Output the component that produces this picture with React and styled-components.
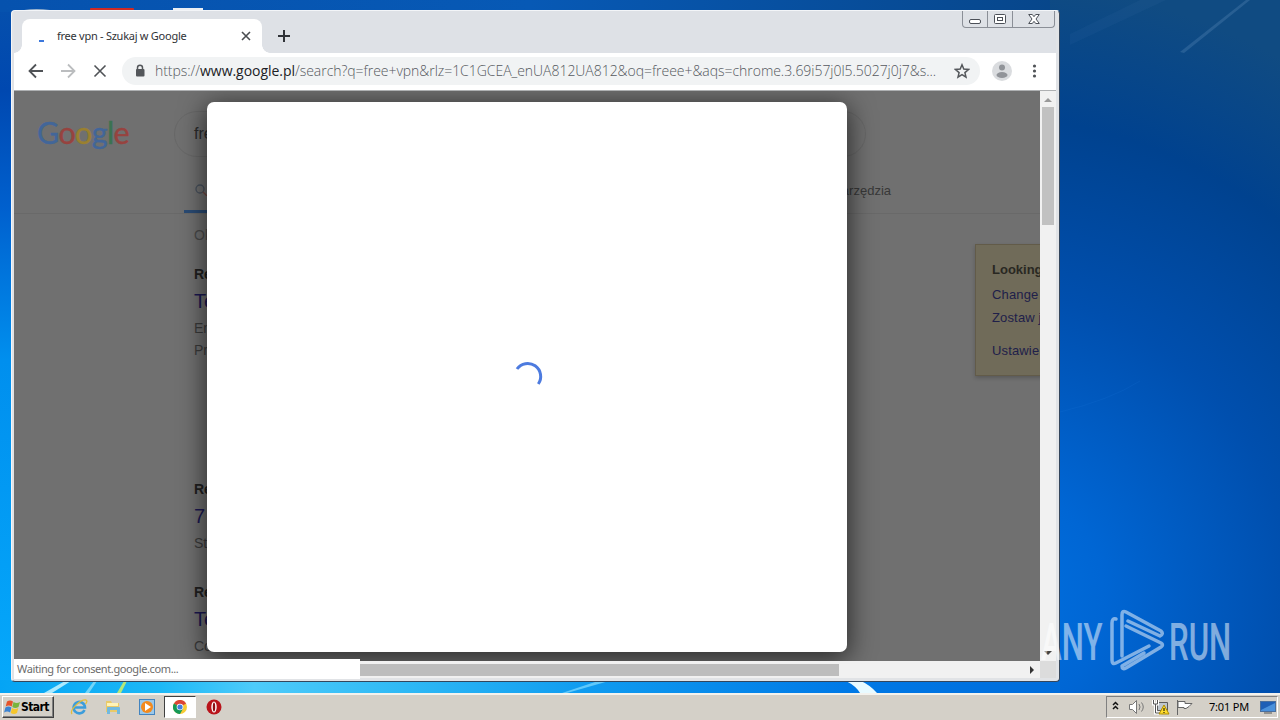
import React from 'react';
import styled, { createGlobalStyle, css } from 'styled-components';

const GlobalStyle = createGlobalStyle`
  * { box-sizing: border-box; }
  body { margin: 0; overflow: hidden; }
  svg { display: block; flex: none; }
`;

const Screen = styled.div`
  position: relative;
  width: 1280px;
  height: 720px;
  display: flex;
  flex-direction: column;
  overflow: hidden;
  font-family: "Noto Sans", "DejaVu Sans", sans-serif;
`;

const Desktop = styled.main`
  position: relative;
  flex: 1;
  overflow: hidden;
`;

const Wallpaper = styled.svg`
  position: absolute;
  inset: 0;
`;

const Window = styled.section`
  position: absolute;
  left: 11px;
  top: 10px;
  width: 1049px;
  height: 672px;
  display: flex;
  flex-direction: column;
  padding: 0 3px 3px 2px;
  background: #e1e3e6;
  border: 1px solid #34465c;
  border-top-color: #f3f5f8;
  border-left-color: #f3f5f8;
  border-radius: 4px;
  overflow: hidden;
`;

const TitleBar = styled.header`
  display: flex;
  align-items: flex-end;
  height: 42px;
  flex: none;
  background: #dee1e6;
`;

const Tab = styled.div`
  position: relative;
  display: flex;
  align-items: center;
  width: 240px;
  height: 34px;
  margin-left: 8px;
  padding: 0 10px 0 16px;
  background: #fff;
  border-radius: 8px 8px 0 0;
  &::before, &::after {
    content: "";
    position: absolute;
    bottom: 0;
    width: 8px;
    height: 8px;
  }
  &::before {
    left: -8px;
    background: radial-gradient(circle at 0 0, transparent 7.5px, #fff 8px);
  }
  &::after {
    right: -8px;
    background: radial-gradient(circle at 100% 0, transparent 7.5px, #fff 8px);
  }
`;

const TabTitle = styled.span`
  flex: 1;
  margin-left: 12px;
  font-size: 11px;
  line-height: 16px;
  letter-spacing: -0.26px;
  color: #303236;
  white-space: nowrap;
`;

const NewTab = styled.div`
  align-self: flex-end;
  margin: 0 0 10px 16px;
`;

const WindowButtons = styled.div`
  display: flex;
  align-self: flex-start;
  height: 17px;
  margin: 0 1px 0 auto;
  border: 1px solid #8b8f97;
  border-top: 0;
  border-radius: 0 0 4px 4px;
`;

const WindowButton = styled.div`
  width: ${p => p.$width}px;
  display: flex;
  align-items: center;
  justify-content: center;
  & + & { border-left: 1px solid #8b8f97; }
`;

const Toolbar = styled.div`
  display: flex;
  align-items: center;
  flex: none;
  height: 38px;
  padding: 0 11px 1px 12px;
  background: #fff;
  border-bottom: 1px solid #aeb0b2;
`;

const ToolIcon = styled.svg`
  margin-right: ${p => p.$gap || 0}px;
`;

const AddressBar = styled.div`
  display: flex;
  align-items: center;
  flex: none;
  width: 858px;
  height: 28px;
  padding: 0 10px 0 12px;
  background: #f1f3f4;
  border-radius: 14px;
`;

const Url = styled.span`
  flex: 1;
  margin-left: 9px;
  font-family: "Open Sans", sans-serif;
  font-weight: 300;
  font-size: 14px;
  line-height: 20px;
  letter-spacing: -0.04px;
  color: #55595e;
  white-space: nowrap;
  b { font-weight: 400; color: #202124; }
`;

const Content = styled.div`
  display: grid;
  grid-template-columns: 1026px 16px;
  grid-template-rows: 570px 17px;
  height: 587px;
  margin-right: auto;
  background: #f1f1f1;
`;

const Page = styled.div`
  position: relative;
  overflow: hidden;
  background: #707070;
  color: #2b2b2b;
  font-family: "Liberation Sans", Arial, sans-serif;
`;

const SearchRow = styled.div`
  display: flex;
  align-items: center;
  height: 86px;
  padding-left: 23px;
`;

const Logo = styled.div`
  width: 137px;
  margin-top: -4px;
  font-family: Lato, sans-serif;
  font-size: 30.5px;
  line-height: 40px;
  letter-spacing: -0.65px;
  span { -webkit-text-stroke: 0.4px currentColor; }
`;

const LogoLetter = styled.span`
  color: ${p => p.$color};
`;

const SearchBox = styled.div`
  width: 692px;
  height: 46px;
  padding: 0 19px;
  border: 1px solid #686868;
  border-radius: 23px;
  font-size: 16px;
  line-height: 44px;
`;

const TabRow = styled.div`
  display: flex;
  justify-content: space-between;
  height: 37px;
  padding: 0 149px 0 170px;
  border-bottom: 1px solid #696969;
  font-size: 13px;
  line-height: 27px;
  color: #383838;
`;

const ActiveTab = styled.div`
  width: 70px;
  height: 36px;
  padding: 6px 10px;
  border-bottom: 3px solid #2a4b74;
`;

const Results = styled.div`
  padding: 12px 0 0 180px;
  font-size: 14px;
  line-height: 22px;
  color: #3b3b3b;
`;

const Stats = styled.div`
  line-height: 18px;
  color: #4a4a4a;
`;

const Result = styled.article`
  margin-top: ${p => p.$top}px;
  strong { display: block; line-height: 20px; color: #202020; }
  h3 {
    margin: 0 0 -1px;
    font-size: 20px;
    font-weight: 400;
    line-height: 34px;
    color: #1b1852;
  }
  p { margin: 0; line-height: 22px; }
`;

const Notice = styled.aside`
  position: absolute;
  left: 961px;
  top: 153px;
  width: 120px;
  height: 132px;
  padding: 13px 16px;
  overflow: hidden;
  background: #706b59;
  border: 1px solid #625b49;
  box-shadow: 0 2px 4px rgba(0, 0, 0, .2);
  font-size: 13px;
  letter-spacing: .15px;
  line-height: 23px;
  color: #20204a;
  white-space: nowrap;
  strong { display: block; margin-bottom: 1px; color: #292822; line-height: 24px; font-size: 13px; letter-spacing: 0; }
`;

const NoticeLink = styled.div`
  margin-top: ${p => p.$top || 0}px;
`;

const Dialog = styled.div`
  position: absolute;
  left: 193px;
  top: 11px;
  width: 640px;
  height: 550px;
  display: flex;
  align-items: center;
  justify-content: center;
  background: #fff;
  border-radius: 7px;
  box-shadow: 0 5px 26px 2px rgba(0, 0, 0, .62);
`;

const track = css`
  display: flex;
  align-items: center;
  background: #f1f1f1;
`;

const VScroll = styled.div`
  ${track}
  flex-direction: column;
  justify-content: space-between;
  padding: 6px 0 5px;
`;

const VThumb = styled.div`
  width: 12px;
  height: 118px;
  margin: 5px 0 auto;
  background: #c1c1c1;
`;

const HScroll = styled.div`
  ${track}
  padding: 1px 5px 0 0;
`;

const HThumb = styled.div`
  width: 479px;
  height: 12px;
  margin-right: auto;
  background: #bdbdbd;
`;

const Status = styled.div`
  position: relative;
  width: 346px;
  height: 20px;
  align-self: flex-end;
  padding-left: 3px;
  margin-bottom: -1px;
  background: #fff;
  font-size: 11px;
  line-height: 19px;
  letter-spacing: -0.38px;
  color: #6b6b6b;
`;

const Corner = styled.div`
  background: #dcdcdc;
`;

const Watermark = styled.svg`
  position: absolute;
  left: 1036px;
  top: 604px;
  opacity: .5;
`;

const Taskbar = styled.footer`
  position: relative;
  display: flex;
  align-items: center;
  height: 27px;
  padding: 1px 2px 2px 2px;
  background: #d4d0c8;
  border-top: 2px solid #f4f2ed;
`;

const StartButton = styled.div`
  display: flex;
  align-items: center;
  width: 52px;
  height: 22px;
  margin-right: 8px;
  padding-left: 1px;
  border: 1px solid;
  border-color: #fff #404040 #404040 #fff;
  box-shadow: inset -1px -1px #808080;
  font-family: "DejaVu Sans Condensed", "DejaVu Sans", sans-serif;
  font-size: 12px;
  font-weight: 700;
  letter-spacing: -0.55px;
  color: #000;
`;

const QuickIcon = styled.div`
  display: flex;
  align-items: center;
  justify-content: center;
  width: ${p => p.$width || 34}px;
  height: 22px;
  ${p => p.$active && css`
    background: #fff;
    border: 1px solid;
    border-color: #404040 #fff #fff #404040;
  `}
`;

const Tray = styled.div`
  display: flex;
  align-items: center;
  width: 172px;
  height: 22px;
  margin-left: auto;
  padding-left: 4px;
  border: 1px solid;
  border-color: #808080 #fff #fff #808080;
`;

const Clock = styled.span`
  width: 51px;
  margin-left: 16px;
  font-size: 11px;
  letter-spacing: -0.2px;
  line-height: 18px;
  color: #000;
  white-space: nowrap;
`;

const LOGO = [
  ['G', '#426699'],
  ['o', '#97433f'],
  ['o', '#9a802f'],
  ['g', '#426699'],
  ['l', '#3b7350'],
  ['e', '#97433f'],
];

function DesktopArt() {
  return (
    <Wallpaper width="1280" height="693" viewBox="0 0 1280 693">
      <defs>
        <linearGradient id="left" x1="0" y1="0" x2="0" y2="1">
          <stop offset="0" stopColor="#0650ac" />
          <stop offset=".13" stopColor="#0048b0" />
          <stop offset=".3" stopColor="#0060ce" />
          <stop offset=".52" stopColor="#008fee" />
          <stop offset="1" stopColor="#05a9fb" />
        </linearGradient>
        <linearGradient id="top" x1="0" y1="0" x2="1" y2="0">
          <stop offset="0" stopColor="#0652ae" />
          <stop offset=".5" stopColor="#0759b5" />
          <stop offset="1" stopColor="#07468a" />
        </linearGradient>
        <radialGradient id="right" gradientUnits="userSpaceOnUse" cx="980" cy="600" r="620">
          <stop offset="0" stopColor="#0072e2" />
          <stop offset=".2" stopColor="#0066d4" />
          <stop offset=".5" stopColor="#004fae" />
          <stop offset=".78" stopColor="#00428f" />
          <stop offset="1" stopColor="#104b82" />
        </radialGradient>
        <linearGradient id="foot" x1="0" y1="0" x2="1" y2="0">
          <stop offset="0" stopColor="#05a4f4" />
          <stop offset=".15" stopColor="#1cb8f6" />
          <stop offset=".24" stopColor="#4ecbfa" />
          <stop offset=".38" stopColor="#2fb9f5" />
          <stop offset=".55" stopColor="#109cf0" />
          <stop offset=".8" stopColor="#0079e6" />
          <stop offset="1" stopColor="#006cdb" />
        </linearGradient>
      </defs>
      <rect width="1280" height="693" fill="url(#left)" />
      <rect width="1060" height="12" fill="url(#top)" />
      <rect x="1050" width="230" height="693" fill="url(#right)" />
      <rect y="680" width="1060" height="13" fill="url(#foot)" />
      <path d="M1180 52 1246 0h4l-66 53z" fill="#7fa8d0" opacity=".22" />
      <path d="M1070 34 1140 0h26l-96 45z" fill="#6a9bd0" opacity=".06" />
      <path d="M1060 412Q1110 400 1140 381" fill="none" stroke="#2a86ea" opacity=".12" />
      <path d="M44 693 65 681h6L52 693z" fill="#c8f4ff" opacity=".85" />
      <path d="M85 693 94 681h3l-8 12z" fill="#9ee5f8" opacity=".7" />
      <path d="M117 693 124 681h3l-6 12z" fill="#b4e77a" />
      <path d="M562 693 598 681h11l-42 12z" fill="#83dcff" opacity=".7" />
      <path d="M846 681q10 5 14 12h17q-7-8-16-12z" fill="#e8faff" />
      <path d="M24 10q12-2 26 0z" fill="#9db5ce" />
      <rect x="90" y="8" width="44" height="4" rx="1" fill="#d02a24" />
      <rect x="173" y="8" width="30" height="4" fill="#e9eef3" />
    </Wallpaper>
  );
}

function BrowserBar() {
  return (
    <>
      <TitleBar>
        <Tab>
          <svg width="7" height="16"><rect x="1" y="12" width="5" height="2" fill="#3c78dc" /></svg>
          <TabTitle>free vpn - Szukaj w Google</TabTitle>
          <svg width="12" height="12" stroke="#4a4d51" strokeWidth="1.6"><path d="m2 2 8 8m0-8-8 8" /></svg>
        </Tab>
        <NewTab>
          <svg width="12" height="14" stroke="#303338" strokeWidth="2"><path d="M0 7h12M6 1v12" /></svg>
        </NewTab>
        <WindowButtons>
          <WindowButton $width={24}>
            <svg width="12" height="17" fill="#fff" stroke="#4c5058"><rect x=".5" y="8.5" width="11" height="4" rx="1.5" /></svg>
          </WindowButton>
          <WindowButton $width={25}>
            <svg width="12" height="12" fill="#fff" stroke="#4c5058"><rect x=".5" y="1.5" width="11" height="9" rx="1" /><rect x="3.5" y="4.5" width="5" height="3" /></svg>
          </WindowButton>
          <WindowButton $width={42}>
            <svg width="12" height="12" fill="#fff" stroke="#4c5058"><path d="M.7 1.5h3.6L6 3.7l1.7-2.2h3.6L8 6l3.3 4.5H7.7L6 8.3l-1.7 2.2H.7L4 6z" /></svg>
          </WindowButton>
        </WindowButtons>
      </TitleBar>
      <Toolbar>
        <ToolIcon $gap={14} width="20" height="16" fill="none" stroke="#505357" strokeWidth="1.8"><path d="M17 8H4M10 1.5 3.5 8l6.5 6.5" /></ToolIcon>
        <ToolIcon $gap={15} width="18" height="16" fill="none" stroke="#bbbdbf" strokeWidth="1.8"><path d="M1 8h13M8 1.5 14.5 8 8 14.5" /></ToolIcon>
        <ToolIcon $gap={15} width="14" height="16" fill="none" stroke="#505357" strokeWidth="1.6"><path d="m1.5 2.5 11 11m0-11-11 11" /></ToolIcon>
        <AddressBar>
          <svg width="12" height="14"><path d="M3.5 6V3.7a2.5 2.5 0 0 1 5 0V6" fill="none" stroke="#54575b" strokeWidth="1.5" /><rect x="2" y="5" width="8.5" height="7.5" rx="1" fill="#54575b" /></svg>
          <Url>https://<b>www.google.pl</b>/search?q=free+vpn&amp;rlz=1C1GCEA_enUA812UA812&amp;oq=freee+&amp;aqs=chrome.3.69i57j0l5.5027j0j7&amp;s...</Url>
          <svg width="16" height="16" fill="none" stroke="#54575b" strokeWidth="1.5"><path d="m8 1.8 1.8 4.3 4.7.4-3.6 3.1 1.1 4.6L8 11.7l-4 2.5 1.1-4.6L1.5 6.5l4.7-.4z" /></svg>
        </AddressBar>
        <svg width="44" height="20"><circle cx="22" cy="10" r="10" fill="#dadcdf" /><circle cx="22" cy="6.5" r="3" fill="#919499" /><ellipse cx="22" cy="14" rx="5.5" ry="3" fill="#919499" /></svg>
        <svg width="21" height="16" fill="#505357"><circle cx="10.5" cy="3" r="1.6" /><circle cx="10.5" cy="8" r="1.6" /><circle cx="10.5" cy="13" r="1.6" /></svg>
      </Toolbar>
    </>
  );
}

function SearchPage() {
  return (
    <Page>
      <SearchRow>
        <Logo>{LOGO.map(([letter, color], i) => <LogoLetter key={i} $color={color}>{letter}</LogoLetter>)}</Logo>
        <SearchBox>free</SearchBox>
      </SearchRow>
      <TabRow>
        <ActiveTab>
          <svg width="13" height="13" fill="none" strokeWidth="1.3"><circle cx="6" cy="6" r="4" stroke="#48515d" /><path d="m9 9 4 4" stroke="#754942" /></svg>
        </ActiveTab>
        <span>Narzędzia</span>
      </TabRow>
      <Results>
        <Stats>Ok</Stats>
        <Result $top={20}><strong>Re</strong><h3>Te</h3><p>En</p><p>Pr</p></Result>
        <Result $top={118}><strong>Re</strong><h3>7</h3><p>St</p></Result>
        <Result $top={28}><strong>Re</strong><h3>Te</h3><p>Co</p></Result>
      </Results>
      <Notice>
        <strong>Looking</strong>
        <NoticeLink>Change</NoticeLink>
        <NoticeLink>Zostaw j</NoticeLink>
        <NoticeLink $top={10}>Ustawie</NoticeLink>
      </Notice>
      <Dialog>
        <svg width="34" height="32" fill="none" stroke="#4d7bdf" strokeWidth="3"><path d="M7 8A12.200 12.200 0 0 1 28.300 23" /></svg>
      </Dialog>
    </Page>
  );
}

function StartFlag() {
  return (
    <svg width="17" height="16" viewBox="0 0 17 16">
      <path d="M3 2.5q3-2 6 0L7.7 7.5q-3-2-6 0z" fill="#e5532a" />
      <path d="M9.5 3q3 2 6.5 0l-1.5 5q-3 2-6.2 0z" fill="#79b43c" />
      <path d="M1.4 8.5q3-2 6 0l-1.3 5q-3-2-6 0z" fill="#3b83d2" />
      <path d="M8 9q3 2 6.3 0L13 14q-3 2-6.3 0z" fill="#f6c62c" />
    </svg>
  );
}

function QuickLaunch() {
  return (
    <>
      <QuickIcon>
        <svg width="18" height="18" fill="none"><path d="M14.5 12A5.7 5.7 0 1 1 15 9.5H5" stroke="#3c9ddb" strokeWidth="2.6" /><path d="M2 16C-1 12 11 1 16 2q2 1-.5 4" stroke="#e3bd3a" strokeWidth="1.3" /></svg>
      </QuickIcon>
      <QuickIcon>
        <svg width="16" height="16"><path d="M1 2h5l1 2h7v9H1z" fill="#e9ca69" /><path d="M2 4h11v3H2z" fill="#fff3b7" /><path d="M2 15V9q0-1 1-1h11q1 0 1 1v6h-3v-4H5v4z" fill="#72b9df" /></svg>
      </QuickIcon>
      <QuickIcon>
        <svg width="16" height="16"><rect x=".5" y=".5" width="15" height="15" fill="#9bc8e9" stroke="#4384bf" /><circle cx="8" cy="8" r="6" fill="#f38a1d" /><path d="m6 4 6 4-6 4z" fill="#fff" /></svg>
      </QuickIcon>
      <QuickIcon $active $width={32}>
        <svg width="14" height="14" viewBox="0 0 14 14"><circle cx="7" cy="7" r="7" fill="#f7cb35" /><path d="M7 7 .9 3.5A7 7 0 0 1 13.1 3.5z" fill="#db4437" /><path d="M.9 3.5A7 7 0 0 0 7 14l3-5.3-3-1.7z" fill="#159957" /><circle cx="7" cy="7" r="3.3" fill="#fff" /><circle cx="7" cy="7" r="2.6" fill="#427fdd" /></svg>
      </QuickIcon>
      <QuickIcon $width={36}>
        <svg width="16" height="16"><circle cx="8" cy="8" r="7.5" fill="#b9141b" /><ellipse cx="8" cy="8" rx="2.7" ry="5.5" fill="#fff" /><ellipse cx="8" cy="8" rx="1.2" ry="4.5" fill="#8e0f14" /></svg>
      </QuickIcon>
    </>
  );
}

function TrayIcons() {
  return (
    <svg width="82" height="18" fill="none">
      <path d="m2 7 2.5-2.5L7 7M2 11l2.5-2.5L7 11" stroke="#111" strokeWidth="1.5" />
      <path d="M18.5 6.5h3l4-4v13l-4-4h-3z" fill="#fff" stroke="#777" />
      <path d="M28 6q2 3 0 6M30.5 4.5q3.5 4.5 0 9" stroke="#777" />
      <path d="M46.5 4.5h10v8h-10z" fill="#bfc6cd" stroke="#5b5b5b" />
      <path d="M42.5 2v4h4V2M44.5 6v9h6" stroke="#fff" strokeWidth="3" />
      <path d="M42.5 2v4h4V2M44.5 6v9h6" stroke="#555" />
      <path d="m53 7 5 9H48z" fill="#ffdc2e" stroke="#ad8b00" />
      <path d="M53 10v3M53 14v1" stroke="#000" />
      <path d="M66.5 2v15" stroke="#666" />
      <path d="M67 3.5h7v2h7l-3 3-3 2h-2v-1h-6z" fill="#fff" stroke="#666" />
    </svg>
  );
}

function App() {
  return (
    <Screen>
      <GlobalStyle />
      <Desktop>
        <DesktopArt />
        <Window>
          <BrowserBar />
          <Content>
            <SearchPage />
            <VScroll>
              <svg width="8" height="5"><path d="M0 5 4 1l4 4z" fill="#999" /></svg>
              <VThumb />
              <svg width="8" height="5"><path d="m0 0 4 4 4-4z" fill="#444" /></svg>
            </VScroll>
            <HScroll>
              <Status>Waiting for consent.google.com...</Status>
              <HThumb />
              <svg width="5" height="8"><path d="m0 0 4 4-4 4z" fill="#333" /></svg>
            </HScroll>
            <Corner />
          </Content>
        </Window>
        <Watermark width="220" height="76" fontFamily="Roboto, sans-serif" fontSize="52" fontWeight="500" fill="#fff">
          <text transform="translate(5 56) scale(.6 1)">ANY</text>
          <text transform="translate(133 56) scale(.6 1)">RUN</text>
          <g fill="none" stroke="#fff" strokeWidth="3.5" strokeLinejoin="round" strokeLinecap="round">
            <path d="M80 15q-4-1-4 4v37q0 5 4 3l33-17" />
            <path d="M86 52V11q0-5 4-3l35 19q3 3-1 5L92 17" />
            <path d="M90 22 125 39q3 2 0 4L90 64q-4 2-4-2l22-13" />
          </g>
        </Watermark>
      </Desktop>
      <Taskbar>
        <StartButton><StartFlag />Start</StartButton>
        <QuickLaunch />
        <Tray>
          <TrayIcons />
          <Clock>7:01 PM</Clock>
          <svg width="16" height="14"><rect x=".5" y="1.5" width="15" height="10" fill="#1f5fb6" stroke="#4b6f9d" /><path d="M1 10 15 3v8H1z" fill="#4b91db" /><path d="M4 13h8" stroke="#555" /></svg>
        </Tray>
      </Taskbar>
    </Screen>
  );
}

export default App;
